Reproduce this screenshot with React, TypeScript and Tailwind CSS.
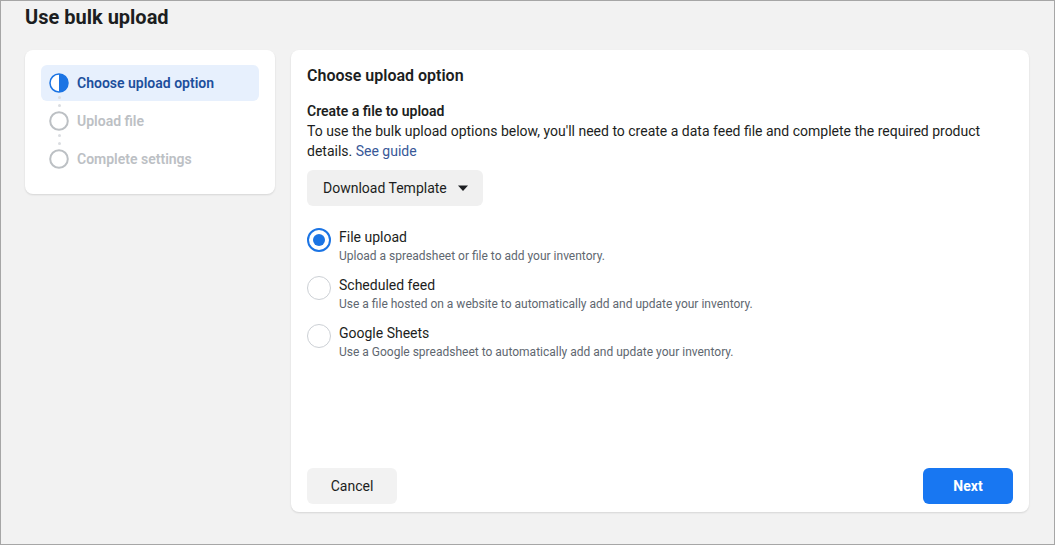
import React from "react";

function StepIcon({ state }: { state: "active" | "idle" }) {
  if (state === "active") {
    return (
      <svg width="20" height="20" viewBox="0 0 20 20">
        <circle cx="10" cy="10" r="9" fill="white" stroke="#1b74e4" strokeWidth="1.5" />
        <path d="M10 1 A9 9 0 0 1 10 19 Z" fill="#1b74e4" />
      </svg>
    );
  }
  return (
    <svg width="20" height="20" viewBox="0 0 20 20">
      <circle cx="10" cy="10" r="8.8" fill="white" stroke="#bcc0c4" strokeWidth="2" />
    </svg>
  );
}

function Dots() {
  return (
    <div className="absolute left-[17px] top-[31px] flex flex-col gap-[5px]">
      <span className="block w-[3px] h-[3px] rounded-full bg-[#dadde1]" />
      <span className="block w-[3px] h-[3px] rounded-full bg-[#dadde1]" />
    </div>
  );
}

function Step({ label, state, dots }: { label: string; state: "active" | "idle"; dots?: boolean }) {
  return (
    <div
      className={
        "relative flex items-center h-[36px] pl-2 gap-2 rounded-md " +
        (state === "active" ? "bg-[#e7f0fd]" : "")
      }
    >
      <StepIcon state={state} />
      <span
        className={
          "text-[14px] font-semibold " + (state === "active" ? "text-[#1d4f9c]" : "text-[#bcc0c4]")
        }
      >
        {label}
      </span>
      {dots && <Dots />}
    </div>
  );
}

function Radio({ checked, title, sub }: { checked?: boolean; title: string; sub: string }) {
  return (
    <div className="flex items-start gap-[8px] h-[48px]">
      <div className="pt-[1px]">
        {checked ? (
          <div className="w-[24px] h-[24px] rounded-full border-2 border-[#1b74e4] flex items-center justify-center bg-white">
            <div className="w-[12px] h-[12px] rounded-full bg-[#1b74e4]" />
          </div>
        ) : (
          <div className="w-[24px] h-[24px] rounded-full border border-[#ccd0d5] bg-white" />
        )}
      </div>
      <div className="flex flex-col">
        <span className="text-[14px] leading-[20px] text-[#1c1e21]">{title}</span>
        <span className="text-[12px] leading-[18px] text-[#606770]">{sub}</span>
      </div>
    </div>
  );
}

export default function App() {
  return (
    <div
      className="w-[1055px] h-[545px] border border-[#a6a6a6] bg-[#f2f2f2] flex flex-col overflow-hidden"
      style={{ fontFamily: "Roboto, 'Liberation Sans', Arial, sans-serif" }}
    >
      <h1 className="pl-6 mt-[2px] text-[20px] leading-[28px] font-bold text-[#1c1e21]">Use bulk upload</h1>
      <div className="flex gap-4 pl-6 pr-[25px] mt-[19px]">
        <div className="w-[250px] h-[144px] bg-white rounded-lg shadow-[0_1px_2px_rgba(0,0,0,0.12)] px-4 pt-[15px] flex flex-col gap-[2px]">
          <Step label="Choose upload option" state="active" dots />
          <Step label="Upload file" state="idle" dots />
          <Step label="Complete settings" state="idle" />
        </div>
        <div className="flex-1 h-[462px] bg-white rounded-lg shadow-[0_1px_2px_rgba(0,0,0,0.12)] px-4 pt-[15px] pb-2 flex flex-col">
          <h2 className="text-[16px] leading-[22px] font-semibold text-[#1c1e21]">Choose upload option</h2>
          <div className="mt-[14px] text-[14px] leading-[20px] font-semibold text-[#1c1e21]">Create a file to upload</div>
          <p className="text-[14px] leading-[20px] text-[#1c1e21]">
            To use the bulk upload options below, you'll need to create a data feed file and complete the required product
            details. <span className="text-[#385898]">See guide</span>
          </p>
          <div className="mt-[9px]">
            <button className="h-[36px] pl-4 pr-[14px] rounded-md bg-[#f0f0f0] flex items-center gap-[10px] text-[14px] text-[#1c1e21]">
              Download Template
              <svg width="12" height="8" viewBox="0 0 12 8">
                <path d="M1 1.5 L11 1.5 L6 7 Z" fill="#1c1e21" />
              </svg>
            </button>
          </div>
          <div className="mt-[21px] flex flex-col">
            <Radio checked title="File upload" sub="Upload a spreadsheet or file to add your inventory." />
            <Radio title="Scheduled feed" sub="Use a file hosted on a website to automatically add and update your inventory." />
            <Radio title="Google Sheets" sub="Use a Google spreadsheet to automatically add and update your inventory." />
          </div>
          <div className="mt-auto flex justify-between">
            <button className="w-[90px] h-[36px] rounded-md bg-[#f2f2f2] text-[14px] text-[#1c1e21]">Cancel</button>
            <button className="w-[90px] h-[36px] rounded-md bg-[#1877f2] text-[14px] font-bold text-white">Next</button>
          </div>
        </div>
      </div>
    </div>
  );
}
